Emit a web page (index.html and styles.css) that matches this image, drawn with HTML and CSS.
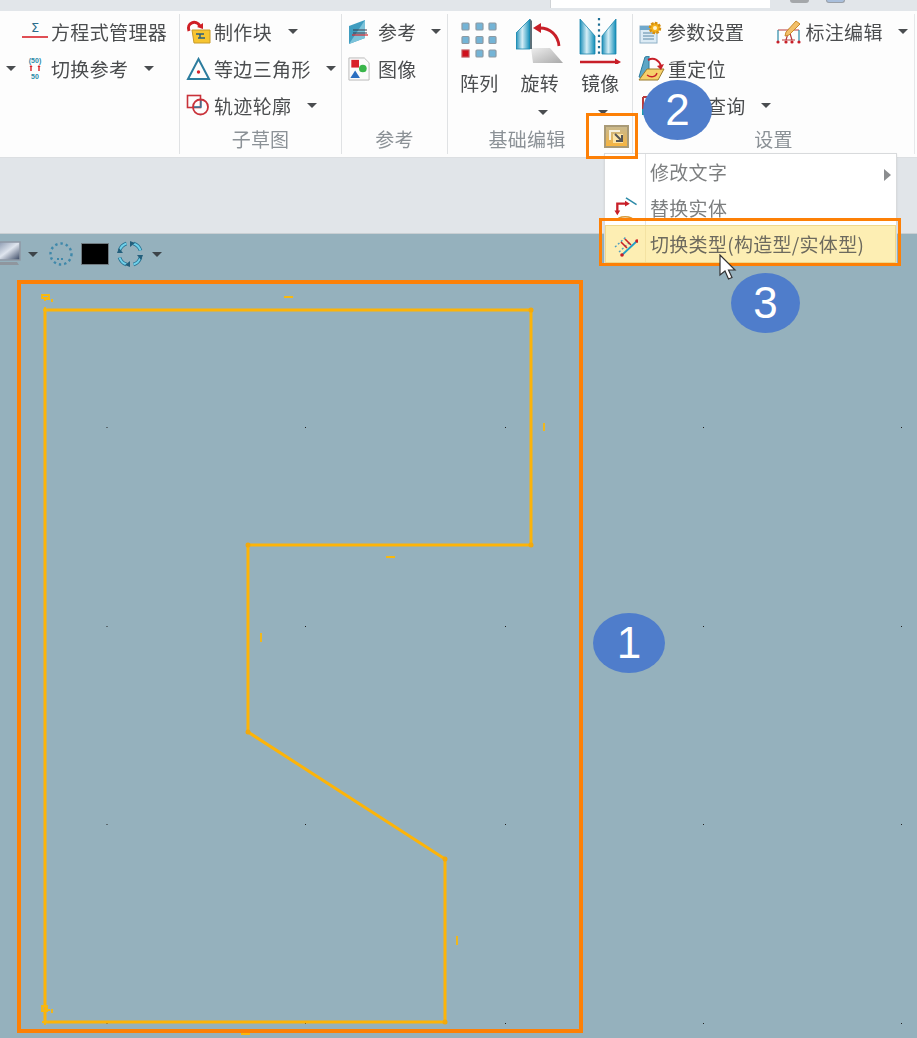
FILE: index.html
```html
<!DOCTYPE html>
<html lang="zh">
<head>
<meta charset="utf-8">
<title>切换类型</title>
<link rel="stylesheet" href="styles.css">
</head>
<body>
<svg class="defs" width="0" height="0" aria-hidden="true">
  <defs>
    <linearGradient id="blade" x1="0" x2="1" y1="0" y2="0">
      <stop offset="0" stop-color="#1d8fb8"/><stop offset=".45" stop-color="#d6eef6"/><stop offset="1" stop-color="#0f8db8"/>
    </linearGradient>
    <linearGradient id="plate" x1="0" x2="1" y1="0" y2="1">
      <stop offset="0" stop-color="#eeeeee"/><stop offset="1" stop-color="#a9a9a9"/>
    </linearGradient>
    <linearGradient id="launch" x1="0" x2="0" y1="0" y2="1">
      <stop offset="0" stop-color="#c8b98f"/><stop offset=".5" stop-color="#dcb66a"/><stop offset="1" stop-color="#fcb53a"/>
    </linearGradient>
    <linearGradient id="screen" x1="0" x2="1" y1="0" y2="1">
      <stop offset="0" stop-color="#7f8fa8"/><stop offset=".5" stop-color="#dfe5ee"/><stop offset="1" stop-color="#34435f"/>
    </linearGradient>
  </defs>
</svg>

<div class="app">
  <header class="topbar">
    <div class="search"></div>
    <span class="peek peek-gray"></span>
    <span class="peek peek-blue"></span>
  </header>

  <section class="ribbon">
    <div class="group g1">
      <div class="rows">
        <div class="row row-eq">
          <svg class="icon i-sigma" viewBox="0 0 26 20"><text x="13" y="11" class="sigma">Σ</text><path d="M0 16h26" stroke="#d8232a" stroke-width="1.600"/></svg>
          <span class="txt">方程式管理器</span>
        </div>
        <div class="row row-switch">
          <i class="caret caret-lead"></i>
          <svg class="icon i-ref50" viewBox="0 0 16 24"><text x="8" y="6" class="tiny">(50)</text><path d="M4 9v5M12 9v5" stroke="#d8232a" stroke-width="1.400"/><path d="M2.400 10 4 8l1.600 2zM10.400 10 12 8l1.600 2z" fill="#d8232a"/><text x="8" y="22" class="tiny">50</text></svg>
          <span class="txt">切换参考</span>
          <i class="caret caret-switch"></i>
        </div>
      </div>
    </div>

    <div class="group g2">
      <div class="rows">
        <div class="row">
          <svg class="icon i-24" viewBox="0 0 25 24"><path d="M6 10h18v13H8z" fill="#f7c531" stroke="#c79a2a"/><path d="M10 14h8M12 18h7M14 14v4" stroke="#2b5f7d" stroke-width="1.500"/><path d="M3 11C0 3 10-1 14 6" fill="none" stroke="#cf1f25" stroke-width="3"/><path d="M11 7l6 2 0-6z" fill="#cf1f25"/></svg>
          <span class="txt">制作块</span>
          <i class="caret caret-block"></i>
        </div>
        <div class="row">
          <svg class="icon i-24" viewBox="0 0 25 24"><path d="M12.500 2 23 22H2z" fill="none" stroke="#2c7c9e" stroke-width="2"/><circle cx="12.500" cy="15" r="1.700" fill="#d8232a"/></svg>
          <span class="txt">等边三角形</span>
          <i class="caret caret-tri"></i>
        </div>
        <div class="row">
          <svg class="icon i-24" viewBox="0 0 25 24"><rect x="1.500" y="1.500" width="13" height="12" fill="none" stroke="#c9323a" stroke-width="1.600"/><path d="M15 5v8H7" fill="none" stroke="#2c7c9e" stroke-width="1.300"/><circle cx="14.500" cy="13" r="7.500" fill="none" stroke="#c9323a" stroke-width="1.800"/></svg>
          <span class="txt">轨迹轮廓</span>
          <i class="caret caret-track"></i>
        </div>
      </div>
      <div class="glabel">子草图</div>
    </div>

    <div class="group g3">
      <div class="rows">
        <div class="row">
          <svg class="icon i-ref" viewBox="0 0 22 24"><path d="M1 6 17 0v18L1 24z" fill="#3f9dc0"/><path d="M17 0v18L1 24z" fill="#7cc3da"/><path d="M5 10h14M5 13h14" stroke="#3a3a4a" stroke-width="1.200"/><path d="M4 15h16" stroke="#d8232a" stroke-width="1.200"/></svg>
          <span class="txt">参考</span>
          <i class="caret caret-ref"></i>
        </div>
        <div class="row">
          <svg class="icon i-ref" viewBox="0 0 22 25"><path d="M.5 1h16l5 5v18H.5z" fill="#fbfbfb" stroke="#b9b9b9"/><rect x="3" y="3" width="8" height="8" fill="#d8232a"/><circle cx="15" cy="12" r="4" fill="#39b54a"/><path d="M7 14l5 8H2z" fill="#2a6fc0"/></svg>
          <span class="txt">图像</span>
        </div>
      </div>
      <div class="glabel">参考</div>
    </div>

    <div class="group g4">
      <div class="bigs">
        <div class="big">
          <svg class="bigicon" viewBox="-6 -4 48 46">
            <g fill="#74b4d6" stroke="#8d9aa3" stroke-width="1.200">
              <rect x="1" y="1" width="7" height="7" rx="1"/><rect x="15" y="1" width="7" height="7" rx="1"/><rect x="28" y="1" width="7" height="7" rx="1"/>
              <rect x="1" y="14.500" width="7" height="7" rx="1"/><rect x="15" y="14.500" width="7" height="7" rx="1"/><rect x="28" y="14.500" width="7" height="7" rx="1"/>
              <rect x="1" y="28" width="7" height="7" fill="#d0101c" stroke="#c2565b"/><rect x="15" y="28" width="7" height="7" rx="1"/><rect x="28" y="28" width="7" height="7" rx="1"/>
            </g>
          </svg>
          <span class="txt">阵列</span>
        </div>
        <div class="big">
          <svg class="bigicon" viewBox="0 0 48 46">
            <path d="M15 30h19l13 15H17z" fill="url(#plate)"/>
            <path d="M0 15 14 1v30H0z" fill="url(#blade)" stroke="#1a86ad" stroke-width=".8"/>
            <path d="M14 1l2 2v28h-2z" fill="#5c6f78"/>
            <path d="M24 10c10 0 18 7 19 18" fill="none" stroke="#c81f28" stroke-width="2.800"/>
            <path d="M25 5l-8 5 8 5z" fill="#c81f28"/>
          </svg>
          <span class="txt">旋转</span>
          <i class="caret caret-big"></i>
        </div>
        <div class="big">
          <svg class="bigicon" viewBox="-3 0 48 46">
            <path d="M1 1 16 18v18H1z" fill="url(#blade)" stroke="#1a86ad" stroke-width=".8"/>
            <path d="M37 1 23 18v18h14z" fill="url(#blade)" stroke="#1a86ad" stroke-width=".8"/>
            <path d="M20 0v38" stroke="#1e6f95" stroke-width="2.200" stroke-dasharray="2.200 3.400"/>
            <path d="M1 44h36" stroke="#c81f28" stroke-width="2.400"/><path d="M36 40.500 42 44l-6 3.500z" fill="#c81f28"/>
          </svg>
          <span class="txt">镜像</span>
          <i class="caret caret-big"></i>
        </div>
      </div>
      <div class="foot">
        <div class="glabel glabel-edit">基础编辑</div>
        <svg class="launcher" viewBox="0 0 25 23"><rect x="1" y="1" width="23" height="21" fill="url(#launch)" stroke="#a99a76" stroke-width="2"/><path d="M6 15V6h10" fill="none" stroke="#f5f0e0" stroke-width="2"/><rect x="9" y="9" width="10" height="9" fill="#ffe9ae" opacity=".9"/><path d="M11 9l6 6M18 10v6h-6" fill="none" stroke="#555" stroke-width="2"/></svg>
      </div>
    </div>

    <div class="group g5">
      <div class="rows">
        <div class="row row-set">
          <svg class="icon i-24" viewBox="0 0 25 24"><rect x="1" y="6" width="17" height="17" fill="#dcebf5" stroke="#8fb0c6"/><path d="M1 6h17v4H1z" fill="#6fa8cc"/><path d="M4 13h11M4 16h11M4 19h11" stroke="#5b88a5"/><circle cx="16" cy="8" r="5" fill="#f6b21a" stroke="#d58f10" stroke-width="2.500" stroke-dasharray="2.500 1.300"/><circle cx="16" cy="8" r="2" fill="#fff3cf"/></svg>
          <span class="txt">参数设置</span>
          <svg class="icon i-24 i-dim" viewBox="0 0 25 24"><path d="M2 10h21M6 20h13M10 20l3-10 3 10" fill="none" stroke="#b93a3a" stroke-width="1.200"/><path d="M2 10v13M23 10v13" stroke="#2c8aa8" stroke-width="1.200"/><circle cx="2" cy="22" r="1.600" fill="#c81f28"/><circle cx="10" cy="22" r="1.600" fill="#c81f28"/><circle cx="16" cy="22" r="1.600" fill="#c81f28"/><circle cx="23" cy="22" r="1.600" fill="#c81f28"/><path d="M10 12 20 1l4 3-11 11-4 1z" fill="#f3c069" stroke="#c98a2a"/></svg>
          <span class="txt">标注编辑</span>
          <i class="caret caret-dim"></i>
        </div>
        <div class="row row-set">
          <svg class="icon i-26" viewBox="0 0 27 25"><path d="M1 21 7 1l4-1v15L5 22z" fill="#5da6c6" stroke="#2c7c9e"/><path d="M1 24l8-11h17l-6 11z" fill="#f6d06a" stroke="#9a7a2a"/><path d="M9 19c4 3 9 2 10-2" fill="none" stroke="#c81f28" stroke-width="1.300"/><path d="M10 4c6-3 11 0 13 6" fill="none" stroke="#c81f28" stroke-width="2"/><path d="M26 8l-3 6-4-4z" fill="#c81f28"/></svg>
          <span class="txt txt-relocate">重定位</span>
        </div>
        <div class="row row-set">
          <svg class="icon i-query" viewBox="0 0 12 20"><path d="M1 1h10M1 1v18" fill="none" stroke="#b93a3a" stroke-width="2"/><path d="M1 13v6" stroke="#1e9bb0" stroke-width="2"/></svg>
          <span class="txt txt-query">查询</span>
          <i class="caret caret-query"></i>
        </div>
      </div>
      <div class="glabel">设置</div>
    </div>
  </section>

  <div class="band"></div>

  <main class="canvas">
    <svg class="sketch" viewBox="0 234 917 804" width="917" height="804">
      <g fill="#222">
        <rect x="106.500" y="427" width="1" height="1"/><rect x="305" y="427" width="1" height="1"/><rect x="505" y="427" width="1" height="1"/><rect x="703" y="427" width="1" height="1"/><rect x="901" y="427" width="1" height="1"/>
        <rect x="106.500" y="626" width="1" height="1"/><rect x="305" y="626" width="1" height="1"/><rect x="505" y="626" width="1" height="1"/><rect x="703" y="626" width="1" height="1"/><rect x="901" y="626" width="1" height="1"/>
        <rect x="106.500" y="824" width="1" height="1"/><rect x="305" y="824" width="1" height="1"/><rect x="505" y="824" width="1" height="1"/><rect x="703" y="824" width="1" height="1"/><rect x="901" y="824" width="1" height="1"/>
        <rect x="106.500" y="1023" width="1" height="1"/><rect x="305" y="1023" width="1" height="1"/><rect x="505" y="1023" width="1" height="1"/><rect x="703" y="1023" width="1" height="1"/><rect x="901" y="1023" width="1" height="1"/>
      </g>
      <path class="shape" d="M45 310H531V545H248V732L445 859V1022H45Z"/>
      <g class="ticks">
        <path d="M284 297h9M544 423v8M386 557h9M261 633v9M457 936v9M241 1034h9"/>
        <path d="M42 295h7v3h-7zM45 298v3M45 299h5M52 299v3M42 1006h5v5h-5zM47 1010h3M52 1009v4"/>
        <path d="M42 1022h6M45 1019v6M43 310h5M45 307v5"/>
      </g>
      <g class="nodes">
        <circle cx="531" cy="310" r="2.500"/><circle cx="531" cy="545" r="2.500"/><circle cx="248" cy="545" r="2.500"/><circle cx="248" cy="732" r="2.500"/><circle cx="445" cy="859" r="2.500"/><circle cx="445" cy="1022" r="2.500"/>
      </g>
    </svg>

    <div class="viewbar">
      <svg class="vb-monitor" viewBox="0 0 26 26"><rect x="1" y="1" width="24" height="18" fill="url(#screen)" stroke="#8e98a5" stroke-width="1.500"/><path d="M4 21h18l2 3H2z" fill="#8f969e"/></svg>
      <i class="caret caret-vb1"></i>
      <svg class="vb-dots" viewBox="0 0 26 26"><circle cx="13" cy="13" r="10.500" fill="none" stroke="#3f88aa" stroke-width="2.400" stroke-dasharray="2.400 3"/><path d="M9 18h8" stroke="#3f88aa" stroke-width="2" stroke-dasharray="2 2"/></svg>
      <span class="vb-black"></span>
      <svg class="vb-rotate" viewBox="0 0 28 28">
        <g fill="none" stroke="#256f8e" stroke-width="3.600"><path d="M3.500 10.500A11 11 0 0 1 10.500 3.500"/><path d="M17.500 3.500A11 11 0 0 1 24.500 10.500"/><path d="M24.500 17.500A11 11 0 0 1 17.500 24.500"/><path d="M10.500 24.500A11 11 0 0 1 3.500 17.500"/></g>
        <g fill="none" stroke="#6fd0ea" stroke-width="2"><path d="M3.500 10.500A11 11 0 0 1 10.500 3.500"/><path d="M17.500 3.500A11 11 0 0 1 24.500 10.500"/><path d="M24.500 17.500A11 11 0 0 1 17.500 24.500"/><path d="M10.500 24.500A11 11 0 0 1 3.500 17.500"/></g>
        <g fill="#235f7c"><path d="M1 13l6 0-4-5z"/><path d="M14 1v6l5-4z"/><path d="M27 15h-6l4 5z"/><path d="M14 27v-6l-5 4z"/></g>
      </svg>
      <i class="caret caret-vb2"></i>
    </div>
  </main>

  <nav class="menu">
    <div class="menu-item">
      <span class="m-icon"></span>
      <span class="m-text">修改文字</span>
      <i class="m-arrow"></i>
    </div>
    <div class="menu-item">
      <span class="m-icon"><svg class="m-svg" viewBox="0 0 25 26"><path d="M13 2l11 7" stroke="#2c8aa8" stroke-width="1.500"/><path d="M4 16V8h9" fill="none" stroke="#c81f28" stroke-width="2.400"/><path d="M1 15h6l-3 5zM12 5v6l5-3z" fill="#c81f28"/><path d="M3 26c2-6 16-6 19 0" fill="none" stroke="#d89a3a" stroke-width="1.500"/></svg></span>
      <span class="m-text">替换实体</span>
    </div>
    <div class="menu-item is-active">
      <span class="m-icon"><svg class="m-svg" viewBox="0 0 25 25"><path d="M2 15 13 5M6 20 17 10" stroke="#4f9fc0" stroke-width="1.400" stroke-dasharray="2 2"/><path d="M9 23 24 9" stroke="#22a0c8" stroke-width="1.800"/><path d="M8 10l6 6M12 7l6 6" stroke="#c81f28" stroke-width="1.600"/><circle cx="9" cy="23" r="1.800" fill="#c81f28"/><circle cx="24" cy="9" r="1.800" fill="#c81f28"/></svg></span>
      <span class="m-text">切换类型(构造型/实体型)</span>
    </div>
  </nav>

  <div class="mark mark-sketch"></div>
  <div class="mark mark-launch"></div>
  <div class="mark mark-item"></div>

  <div class="badge badge-1">1</div>
  <div class="badge badge-2">2</div>
  <div class="badge badge-3">3</div>

  <svg class="cursor" viewBox="0 0 18 26"><path d="M1 1v20l5-4 3.500 8 3.500-1.500L9.500 16H16z" fill="#fff" stroke="#333" stroke-width="1.200"/></svg>
</div>
</body>
</html>
```

FILE: styles.css
```css
* { box-sizing: border-box; }

html, body {
  margin: 0;
  padding: 0;
  background: #95b1bd;
}

body {
  font-family: "Noto Sans CJK SC", "Noto Sans", sans-serif;
  color: #4d4f51;
}

.defs { position: absolute; }

.app {
  position: relative;
  width: 917px;
  height: 1038px;
  overflow: hidden;
  display: flex;
  flex-direction: column;
}

/* top strip */
.topbar {
  flex: 0 0 11px;
  background: #e2e6ea;
  display: flex;
  align-items: flex-start;
  padding-left: 550px;
  gap: 17px;
}
.search {
  width: 220px;
  height: 8px;
  background: #fff;
  border-left: 1px solid #d0d3d6;
  margin-right: 3px;
}
.peek {
  width: 19px;
  height: 3px;
  border-radius: 0 0 9px 9px;
}
.peek-gray { background: #a4a7aa; }
.peek-blue { background: #a9bfdc; border: 1px solid #9aa0a8; border-top: 0; }

/* ribbon */
.ribbon {
  flex: 0 0 146px;
  background: #fdfdfd;
  display: flex;
  padding: 3px 0;
}
.group {
  display: flex;
  flex-direction: column;
  border-right: 1px solid #e0e2e4;
}
.g1 { width: 180px; }
.g2 { width: 162px; }
.g3 { width: 106px; }
.g4 { width: 185px; }
.g5 { width: 282px; }

.rows {
  flex: 1;
  margin-top: -1px;
}
.row {
  height: 37px;
  display: flex;
  align-items: center;
}
.txt {
  font-size: 19px;
  letter-spacing: .35px;
  line-height: 24px;
  white-space: nowrap;
  color: #4b4d4f;
  filter: blur(.4px);
}
.glabel {
  flex: 0 0 29px;
  height: 29px;
  line-height: 27px;
  text-align: center;
  font-size: 19px;
  letter-spacing: .2px;
  color: #8b9196;
  filter: blur(.4px);
}

.icon { display: block; flex: none; }
.i-24 { width: 25px; height: 24px; }
.i-26 { width: 27px; height: 25px; }

.caret {
  display: block;
  flex: none;
  width: 0;
  height: 0;
  border-left: 5px solid transparent;
  border-right: 5px solid transparent;
  border-top: 5.500px solid #4a4d50;
}

/* group 1 */
.row-eq { padding-left: 22px; }
.i-sigma { width: 26px; height: 20px; margin-right: 3px; margin-top: -2px; }
.sigma {
  font-family: "DejaVu Sans", sans-serif;
  font-size: 13px;
  text-anchor: middle;
  fill: #2c6d8c;
}
.row-switch { padding-left: 6px; }
.caret-lead { margin-right: 11px; }
.i-ref50 { width: 16px; height: 24px; margin-right: 8px; }
.tiny {
  font-family: "Liberation Sans", sans-serif;
  font-size: 7px;
  font-weight: 700;
  text-anchor: middle;
  fill: #2c8aa8;
}
.caret-switch { margin-left: 16px; }

/* group 2 */
.g2 .row { padding-left: 6px; }
.g2 .icon { margin-right: 3px; }
.caret-block { margin-left: 16px; }
.caret-tri { margin-left: 15px; }
.caret-track { margin-left: 16px; }

/* group 3 */
.g3 .row { padding-left: 6px; }
.i-ref { width: 22px; height: 24px; margin-right: 8px; }
.caret-ref { margin-left: 14px; }

/* group 4 */
.g4 { padding-left: 1px; }
.bigs {
  flex: 1;
  display: flex;
  padding-top: 4px;
}
.big {
  width: 60.500px;
  display: flex;
  flex-direction: column;
  align-items: center;
}
.bigicon { display: block; height: 46px; width: 48px; flex: none; margin-bottom: 7px; }
.big .txt { line-height: 24px; }
.caret-big { margin-top: 15px; margin-left: 6px; }

.foot {
  flex: 0 0 29px;
  display: flex;
  align-items: flex-start;
}
.glabel-edit { width: 156px; flex: none; }
.launcher { display: block; width: 25px; height: 23px; margin-top: 0; margin-left: -1px; }

/* group 5 */
.g5 { border-right: 1px solid #e6e8ea; }
.row-set { padding-left: 6px; }
.row-set .txt { margin-left: 3px; }
.i-dim { margin-left: 32px; margin-right: 1px; }
.caret-dim { margin-left: 15px; }
.i-26 { margin-left: -1px; }
.row-set .txt-relocate { margin-left: 3px; }
.i-query { width: 12px; height: 20px; margin-left: 3px; }
.row-set .txt-query { margin-left: 53px; }
.caret-query { margin-left: 15px; }

/* gray band */
.band {
  flex: 0 0 77px;
  background: #e1e5e9;
  border-top: 1px solid #dcdfe2;
  border-bottom: 1px solid #c9cfd3;
}

/* canvas */
.canvas {
  position: relative;
  flex: 1;
  background: #95b1bd;
}
.sketch { display: block; }
.shape {
  fill: none;
  stroke: #fdb408;
  stroke-width: 3;
}
.ticks path {
  fill: none;
  stroke: #f9b80c;
  stroke-width: 1.800;
}
.nodes circle { fill: #f2a90c; }

.viewbar {
  position: absolute;
  left: -5px;
  top: 6px;
  display: flex;
  align-items: center;
}
.vb-monitor { width: 26px; height: 26px; display: block; }
.caret-vb1 { margin-left: 7px; border-top-color: #3d4449; }
.vb-dots { width: 26px; height: 26px; display: block; margin-left: 10px; }
.vb-black {
  display: block;
  width: 28px;
  height: 22px;
  margin-left: 7px;
  background: #000;
  border: 1px solid #6f7a80;
}
.vb-rotate { width: 28px; height: 28px; display: block; margin-left: 7px; }
.caret-vb2 { margin-left: 8px; border-top-color: #3d4449; }

/* popup menu */
.menu {
  position: absolute;
  left: 604px;
  top: 153px;
  width: 293px;
  background: #fff;
  border: 1px solid #d8dadc;
  box-shadow: 0 1px 2px rgba(0, 0, 0, .08);
}
.menu-item {
  position: relative;
  height: 36px;
  display: flex;
  align-items: center;
}
.m-icon {
  flex: none;
  width: 41px;
  height: 100%;
  border-right: 1px solid #e2e4e6;
  display: flex;
  align-items: center;
  justify-content: center;
}
.m-svg { display: block; width: 25px; height: 25px; }
.m-text {
  margin-left: 4px;
  padding-bottom: 2px;
  font-size: 19px;
  letter-spacing: .3px;
  white-space: nowrap;
  color: #7d7f80;
  filter: blur(.4px);
}
.m-arrow {
  position: absolute;
  right: 5px;
  top: 15px;
  width: 0;
  height: 0;
  border-top: 6px solid transparent;
  border-bottom: 6px solid transparent;
  border-left: 7px solid #8b8d8f;
}
.is-active {
  height: 38px;
  margin-top: -1px;
  background: #fdeeb3;
  border: 1px solid #f0d98a;
}
.is-active .m-icon { border-right-color: #f4e2a2; width: 40px; }
.is-active .m-text { color: #6d6a5e; }

/* annotation overlays */
.mark {
  position: absolute;
  border: 3.500px solid #fd8006;
}
.mark-sketch { left: 17px; top: 280px; width: 566px; height: 753px; border-width: 4px; }
.mark-launch { left: 586px; top: 113px; width: 52px; height: 46px; }
.mark-item { left: 599px; top: 218px; width: 302px; height: 48px; }

.badge {
  position: absolute;
  display: flex;
  align-items: center;
  justify-content: center;
  border-radius: 50%;
  background: #4f7dcb;
  color: #fff;
  font-family: "Liberation Sans", sans-serif;
  font-size: 44px;
  line-height: 1;
}
.badge-1 { left: 593px; top: 613px; width: 72px; height: 60px; }
.badge-2 { left: 643px; top: 80px; width: 69px; height: 60px; }
.badge-3 { left: 731px; top: 273px; width: 69px; height: 60px; }

.cursor {
  position: absolute;
  left: 719px;
  top: 254px;
  width: 18px;
  height: 26px;
}
```
